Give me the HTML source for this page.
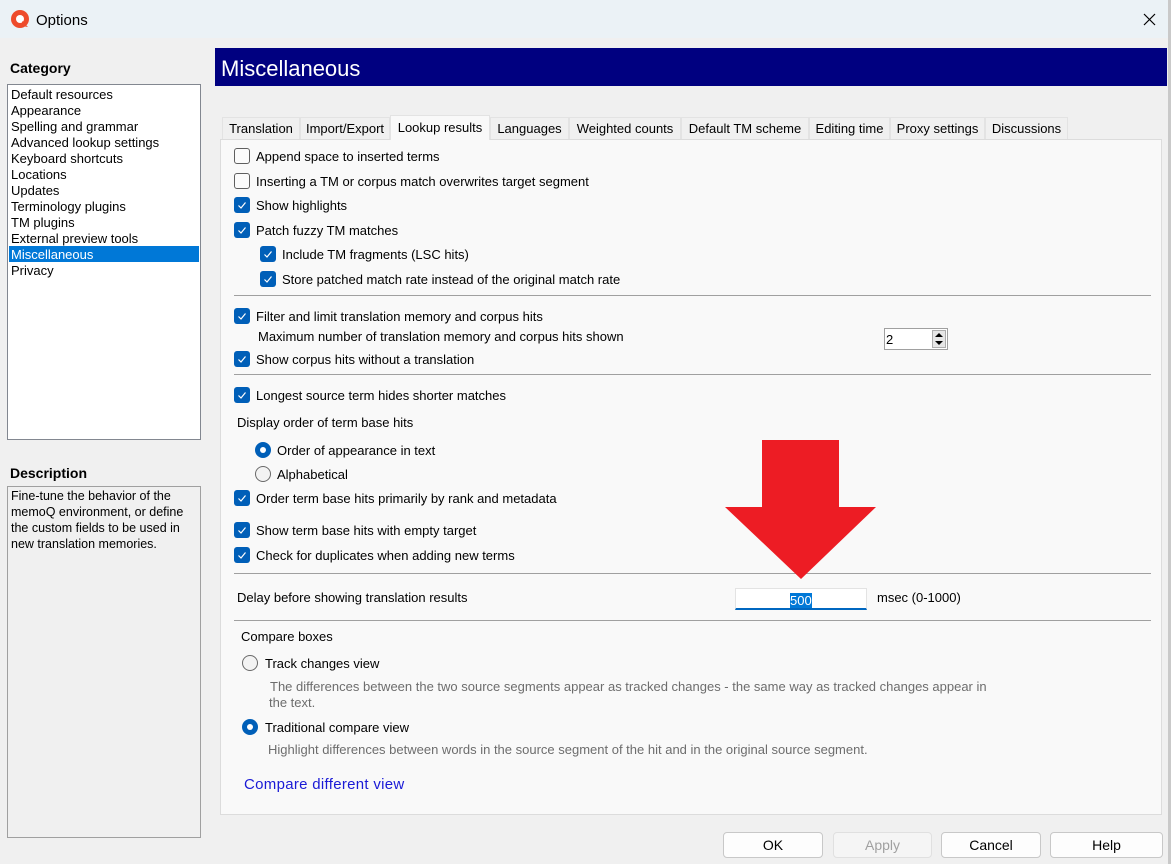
<!DOCTYPE html>
<html><head><meta charset="utf-8"><style>
*{margin:0;padding:0;box-sizing:border-box}
body{width:1171px;height:864px;background:#f0f0f0;font-family:"Liberation Sans",Arial,sans-serif;font-size:13px;color:#000;position:relative;overflow:hidden}
.a{position:absolute;white-space:nowrap;line-height:16px;margin-top:1px}
.cb{position:absolute;width:16px;height:16px;border-radius:3px;background:#005fb8}
.cb svg{position:absolute;left:3px;top:3px}
.cu{position:absolute;width:16px;height:16px;border-radius:3px;border:1px solid #5f5f5f;background:#fbfbfb}
.rs{position:absolute;width:16px;height:16px;border-radius:50%;background:#005fb8}
.rs:after{content:"";position:absolute;left:5px;top:5px;width:6px;height:6px;border-radius:50%;background:#fff}
.ru{position:absolute;width:16px;height:16px;border-radius:50%;border:1px solid #6a6a6a;background:#f3f3f3}
.sep{position:absolute;left:234px;width:917px;height:1px;background:#a0a0a0}
.tab{position:absolute;top:117px;height:22px;border:1px solid #e3e3e3;border-bottom:none;background:#f0f0f0;text-align:center;line-height:22px}
.btn{position:absolute;top:832px;height:26px;border:1px solid #c8c8c8;border-radius:4px;background:#fdfdfd;text-align:center;line-height:25px;font-size:14px}
.g{color:#6d6d6d}
</style></head><body>
<div style="position:absolute;left:0;top:0;width:1171px;height:38px;background:#ebf2f6"></div>
<div style="position:absolute;left:1168px;top:0;width:3px;height:864px;background:#c9c9c9"></div>
<svg style="position:absolute;left:10px;top:9px" width="20" height="20" viewBox="0 0 20 20"><circle cx="10" cy="10" r="9" fill="#ee4b2b"/><circle cx="10" cy="10" r="4" fill="#fff"/><path d="M12 12 L18 18 L12 17Z" fill="#ee4b2b"/></svg>
<div class="a" style="left:36px;top:12px;font-size:15px">Options</div>
<svg style="position:absolute;left:1143px;top:13px" width="13" height="13"><path d="M1 1L12 12M12 1L1 12" stroke="#000" stroke-width="1.2"/></svg>

<div class="a" style="left:10px;top:59px;font-weight:bold;font-size:14px">Category</div>
<div style="position:absolute;left:7px;top:84px;width:194px;height:356px;background:#fff;border:1px solid #828790"></div>
<div style="position:absolute;left:9px;top:246px;width:190px;height:16px;background:#0078d7"></div>
<div class="a" style="left:11px;top:86px;line-height:16px">Default resources<br>Appearance<br>Spelling and grammar<br>Advanced lookup settings<br>Keyboard shortcuts<br>Locations<br>Updates<br>Terminology plugins<br>TM plugins<br>External preview tools<br><span style="color:#fff">Miscellaneous</span><br>Privacy</div>

<div class="a" style="left:10px;top:464px;font-weight:bold;font-size:14px">Description</div>
<div style="position:absolute;left:7px;top:486px;width:194px;height:352px;border:1px solid #a0a0a0;background:#f0f0f0"></div>
<div class="a" style="left:11px;top:487px;line-height:16px;font-size:12.5px">Fine-tune the behavior of the<br>memoQ environment, or define<br>the custom fields to be used in<br>new translation memories.</div>

<div style="position:absolute;left:215px;top:48px;width:952px;height:38px;background:#000080"></div>
<div class="a" style="left:221px;top:55px;color:#fff;font-size:22px;line-height:26px">Miscellaneous</div>

<div style="position:absolute;left:220px;top:139px;width:942px;height:676px;background:#f9f9f9;border:1px solid #dcdcdc"></div>
<div class="tab" style="left:222px;width:78px">Translation</div>
<div class="tab" style="left:300px;width:90px">Import/Export</div>
<div class="tab" style="left:390px;width:100px;top:115px;height:25px;background:#f9f9f9;line-height:23px">Lookup results</div>
<div class="tab" style="left:490px;width:79px">Languages</div>
<div class="tab" style="left:569px;width:112px">Weighted counts</div>
<div class="tab" style="left:681px;width:128px">Default TM scheme</div>
<div class="tab" style="left:809px;width:81px">Editing time</div>
<div class="tab" style="left:890px;width:95px">Proxy settings</div>
<div class="tab" style="left:985px;width:83px">Discussions</div>

<svg width="0" height="0" style="position:absolute"><defs><path id="ck" d="M1.5 5.5L4 8L8.5 2.5" stroke="#fff" stroke-width="1.2" fill="none"/></defs></svg>

<div class="cu" style="left:234px;top:148px"></div><div class="a" style="left:256px;top:148px">Append space to inserted terms</div>
<div class="cu" style="left:234px;top:173px"></div><div class="a" style="left:256px;top:173px">Inserting a TM or corpus match overwrites target segment</div>
<div class="cb" style="left:234px;top:197px"><svg width="10" height="10"><use href="#ck"/></svg></div><div class="a" style="left:256px;top:197px">Show highlights</div>
<div class="cb" style="left:234px;top:222px"><svg width="10" height="10"><use href="#ck"/></svg></div><div class="a" style="left:256px;top:222px">Patch fuzzy TM matches</div>
<div class="cb" style="left:260px;top:246px"><svg width="10" height="10"><use href="#ck"/></svg></div><div class="a" style="left:282px;top:246px">Include TM fragments (LSC hits)</div>
<div class="cb" style="left:260px;top:271px"><svg width="10" height="10"><use href="#ck"/></svg></div><div class="a" style="left:282px;top:271px">Store patched match rate instead of the original match rate</div>
<div class="sep" style="top:295px"></div>
<div class="cb" style="left:234px;top:308px"><svg width="10" height="10"><use href="#ck"/></svg></div><div class="a" style="left:256px;top:308px">Filter and limit translation memory and corpus hits</div>
<div class="a" style="left:258px;top:328px">Maximum number of translation memory and corpus hits shown</div>
<div style="position:absolute;left:884px;top:328px;width:64px;height:22px;border:1px solid #a0a0a0;background:#fff"></div>
<div class="a" style="left:886px;top:331px">2</div>
<div style="position:absolute;left:932px;top:330px;width:14px;height:18px;border:1px solid #adadad;background:#e6e6e6"></div>
<svg style="position:absolute;left:934px;top:331px" width="10" height="16"><path d="M1 6L5 2L9 6Z M1 10L5 14L9 10Z" fill="#000"/></svg>
<div class="cb" style="left:234px;top:351px"><svg width="10" height="10"><use href="#ck"/></svg></div><div class="a" style="left:256px;top:351px">Show corpus hits without a translation</div>
<div class="sep" style="top:374px"></div>
<div class="cb" style="left:234px;top:387px"><svg width="10" height="10"><use href="#ck"/></svg></div><div class="a" style="left:256px;top:387px">Longest source term hides shorter matches</div>
<div class="a" style="left:237px;top:414px">Display order of term base hits</div>
<div class="rs" style="left:255px;top:442px"></div><div class="a" style="left:277px;top:442px">Order of appearance in text</div>
<div class="ru" style="left:255px;top:466px"></div><div class="a" style="left:277px;top:466px">Alphabetical</div>
<div class="cb" style="left:234px;top:490px"><svg width="10" height="10"><use href="#ck"/></svg></div><div class="a" style="left:256px;top:490px">Order term base hits primarily by rank and metadata</div>
<div class="cb" style="left:234px;top:522px"><svg width="10" height="10"><use href="#ck"/></svg></div><div class="a" style="left:256px;top:522px">Show term base hits with empty target</div>
<div class="cb" style="left:234px;top:547px"><svg width="10" height="10"><use href="#ck"/></svg></div><div class="a" style="left:256px;top:547px">Check for duplicates when adding new terms</div>
<div class="sep" style="top:573px"></div>
<div class="a" style="left:237px;top:589px">Delay before showing translation results</div>
<div style="position:absolute;left:735px;top:588px;width:132px;height:22px;background:#fff;border:1px solid #e3e3e3;border-bottom:2px solid #0067c0"></div>
<div class="a" style="left:790px;top:592px;background:#0078d7;color:#fff;line-height:15px">500</div>
<div class="a" style="left:877px;top:589px">msec (0-1000)</div>
<div class="sep" style="top:620px"></div>
<div class="a" style="left:241px;top:628px">Compare boxes</div>
<div class="ru" style="left:242px;top:655px"></div><div class="a" style="left:265px;top:655px">Track changes view</div>
<div class="a g" style="left:270px;top:678px;font-size:13px">The differences between the two source segments appear as tracked changes - the same way as tracked changes appear in</div>
<div class="a g" style="left:269px;top:694px;font-size:13px">the text.</div>
<div class="rs" style="left:242px;top:719px"></div><div class="a" style="left:265px;top:719px">Traditional compare view</div>
<div class="a g" style="left:268px;top:741px;font-size:13px">Highlight differences between words in the source segment of the hit and in the original source segment.</div>
<div class="a" style="left:244px;top:775px;font-size:15px;line-height:18px;color:#1a1ad6;letter-spacing:0.3px">Compare different view</div>

<svg style="position:absolute;left:724px;top:439px" width="155" height="142"><path d="M38 1H115V68H152L77 140L1 68H38Z" fill="#ed1c24"/></svg>

<div class="btn" style="left:723px;width:100px">OK</div>
<div class="btn" style="left:833px;width:99px;color:#a0a0a0;border-color:#e0e0e0;background:#f5f5f5">Apply</div>
<div class="btn" style="left:941px;width:100px">Cancel</div>
<div class="btn" style="left:1050px;width:113px">Help</div>
</body></html>
